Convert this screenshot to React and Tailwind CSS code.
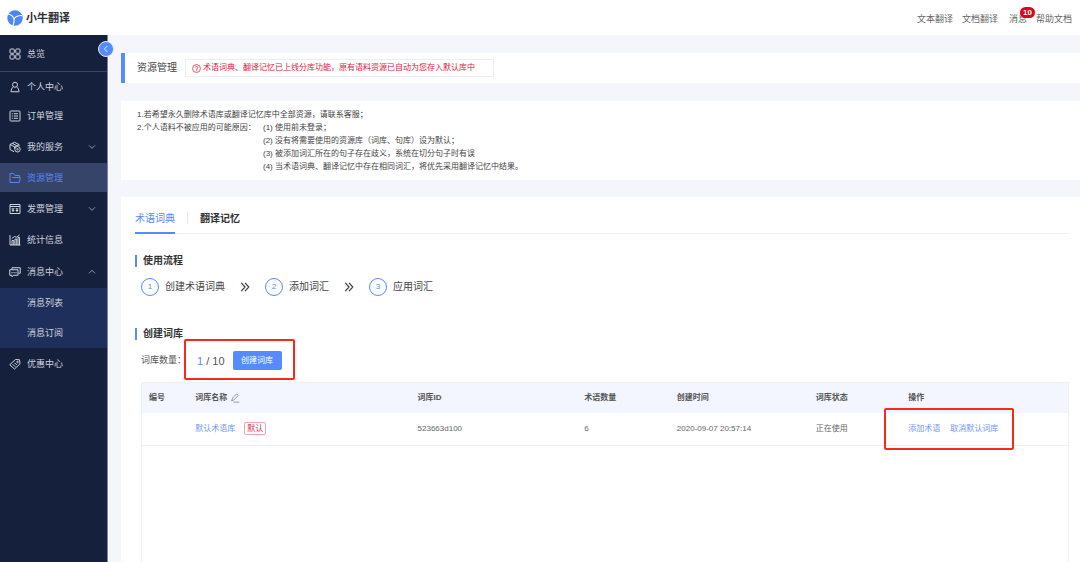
import React from "react";
import clsx from "clsx";

function Icon({ children, className = "w-3 h-3" }) {
    return (
        <svg viewBox="0 0 24 24" fill="none" stroke="currentColor" strokeWidth="2" strokeLinejoin="round" className={clsx("shrink-0", className)} aria-hidden="true">
            {children}
        </svg>
    )
}

const ICONS = {
    grid: (
        <>
            <rect x="2" y="2" width="8.5" height="8.5" rx="1.5" />
            <rect x="13.5" y="2" width="8.5" height="8.5" rx="1.5" />
            <rect x="2" y="13.5" width="8.5" height="8.5" rx="1.5" />
            <rect x="13.5" y="13.5" width="8.5" height="8.5" rx="1.5" />
        </>
    ),
    user: (
        <>
            <circle cx="12" cy="7.5" r="5" />
            <path d="M8.5 11.5C5.5 14 4.5 17 4 21.5h16c-.5-4.500-1.500-7.500-4.500-10" />
        </>
    ),
    order: (
        <>
            <rect x="2" y="2" width="20" height="20" rx="1.500" />
            <path d="M9.500 7.500H18M9.500 12H18M9.500 16.500H18M5.500 7.500h2M5.500 12h2M5.500 16.500h2" />
        </>
    ),
    service: (
        <>
            <path d="M10 21.500 2 17V7l9-4.500L20 7v3M2 7l9 4.500L20 7M11 11.500V15M6.500 4.800l9 4.500" />
            <circle cx="17" cy="16.500" r="5.500" />
            <circle cx="17" cy="16.500" r="1.500" />
        </>
    ),
    folder: <path d="M2 21V3h7.500l2.500 4h9v4M2 21h18.500L22.500 11H6.500" />,
    invoice: (
        <>
            <path d="M2 3h20v18H2zM2 7h20" />
            <path d="m5.500 10 2.500 3 2.500-3M8 13v5M5.500 14.500h5M13.500 11.500h5M16 11.500V18M13.500 15h5" />
        </>
    ),
    stats: (
        <>
            <path d="M2 2v20h21" />
            <path d="M6 22v-9h3.500v9M12 22V10h3.500v12M18 22V7h3v15M5.500 9 11 5l4 1.500L21 2" />
        </>
    ),
    message: (
        <>
            <path d="M6 7V3.500h16.500v11H19" />
            <path d="M1.500 7.500H18v11H9L6 21.500v-3H1.500z" />
            <path d="M5 13h2M9 13h2M13 13h2" strokeWidth="2.500" />
        </>
    ),
    coupon: (
        <>
            <path d="M1.500 13.500 13 3l8 .5 1 8L11 22z" />
            <circle cx="17" cy="8" r="1.500" />
            <path d="m7.500 12.500 5 5M11 9.500l4.500 4.500" />
        </>
    ),
}

function Chevron({ up }) {
    return (
        <Icon className="w-2 h-2 ml-auto mr-[11px]">
            <path d={up ? "m3 16 9-9 9 9" : "m3 7 9 9 9-9"} />
        </Icon>
    )
}

function MenuItem({ icon, label, arrow, active, className }) {
    return (
        <a
            href="#"
            className={clsx(
                "flex items-center gap-[6px] h-[29px] pl-[9px] text-[9px] leading-3",
                active ? "bg-[#36446a] text-[#5585f5]" : "text-[#d0d4dd]",
                className
            )}
        >
            <Icon>{ICONS[icon]}</Icon>
            <span>{label}</span>
            {arrow && <Chevron up={arrow === "up"} />}
        </a>
    )
}

function Sidebar() {
    return (
        <aside className="relative w-[108px] shrink-0 bg-[#15203d] border-r border-[#7a84a0]">
            <nav className="flex flex-col">
                <div className="h-[37px] pt-1 border-b border-[#3b4560]">
                    <MenuItem icon="grid" label="总览" />
                </div>
                <MenuItem icon="user" label="个人中心" />
                <MenuItem icon="order" label="订单管理" />
                <div className="flex flex-col gap-[2px] pt-[2px]">
                    <MenuItem icon="service" label="我的服务" arrow="down" />
                    <MenuItem icon="folder" label="资源管理" active />
                    <MenuItem icon="invoice" label="发票管理" arrow="down" />
                    <MenuItem icon="stats" label="统计信息" />
                    <MenuItem icon="message" label="消息中心" arrow="up" className="mt-px" />
                    <div className="flex flex-col bg-[#1f2f5b] text-[9px] leading-3 text-[#d0d4dd]">
                        <a href="#" className="flex items-center h-[30px] pl-[27px]">消息列表</a>
                        <a href="#" className="flex items-center h-[30px] pl-[27px]">消息订阅</a>
                    </div>
                    <MenuItem icon="coupon" label="优惠中心" className="-mt-px" />
                </div>
            </nav>
            <button type="button" aria-label="收起菜单" className="absolute top-[6px] -right-[7px] w-4 h-4 rounded-full border border-[#dfe6fa] bg-[#558bff] text-white flex items-center justify-center">
                <Icon className="w-2 h-2"><path d="m16 3-9 9 9 9" strokeWidth="2.500" /></Icon>
            </button>
        </aside>
    )
}

function Header() {
    return (
        <header className="flex items-center justify-between h-[35px] pl-[7px] pr-2 bg-white">
            <a href="#" className="flex items-center gap-[3px] text-[#2b2e36]">
                <svg viewBox="0 0 32 32" className="w-4 h-4" aria-hidden="true">
                    <circle cx="16" cy="16" r="15.500" fill="#4f86f7" />
                    <path d="M2 8c6 1 10 4 12 10M14 20c1-6 6-9 16-9M14 17c1 5 0 9-2 14" fill="none" stroke="#fff" strokeWidth="2.400" />
                </svg>
                <span className="text-[11px] leading-4 font-bold">小牛翻译</span>
            </a>
            <nav className="flex gap-[9px] pt-[2px] text-[9px] leading-3 text-[#666]">
                <a href="#">文本翻译</a>
                <a href="#">文档翻译</a>
                <a href="#" className="relative ml-[2px]">
                    消息
                    <span className="absolute -top-[6px] left-[11px] w-[15px] h-[11px] rounded-full bg-[#e0001f] text-white text-[8px] leading-[11px] font-bold text-center">10</span>
                </a>
                <a href="#">帮助文档</a>
            </nav>
        </header>
    )
}

function SectionTitle({ children }) {
    return (
        <h2 className="flex items-center gap-[6px] text-[10px] leading-3 font-bold text-[#333]">
            <span className="w-[2px] h-3 bg-[#558bff]" />
            {children}
        </h2>
    )
}

const STEPS = ["创建术语词典", "添加词汇", "应用词汇"]

function Steps() {
    return (
        <ol className="flex items-center pl-[6px] mt-[11px] text-[10px] leading-3 text-[#444]">
            {STEPS.map((step, i) => (
                <li key={step} className="flex items-center">
                    {i > 0 && (
                        <Icon className="w-[10px] h-[10px] mx-[15px]">
                            <path d="m3 2 9 10-9 10M12 2l9 10-9 10" strokeWidth="3" />
                        </Icon>
                    )}
                    <span className="flex items-center justify-center w-[18px] h-[18px] mr-[6px] rounded-full border border-[#558bff] text-[8px] text-[#558bff]">{i + 1}</span>
                    {step}
                </li>
            ))}
        </ol>
    )
}

function DictTable() {
    return (
        <div className="grow ml-[6px] mt-3 border border-b-0 border-[#eef0f6]">
            <table className="w-full table-fixed text-left text-[8px] leading-3 text-[#666]">
                <thead className="bg-[#f3f6fe] text-[#555]">
                    <tr className="h-[30px] *:pl-[7px] *:font-bold">
                        <th className="w-[5%]">编号</th>
                        <th className="w-[24%]">
                            <span className="flex items-center gap-[3px]">
                                词库名称
                                <button type="button" aria-label="编辑词库名称" className="text-[#888]">
                                    <Icon className="w-[10px] h-[10px]"><path d="M4 19 6 12 16 2l4 4L10 16zM8 22h14" /></Icon>
                                </button>
                            </span>
                        </th>
                        <th className="w-[18%]">词库ID</th>
                        <th className="w-[10%]">术语数量</th>
                        <th className="w-[15%]">创建时间</th>
                        <th className="w-[10%]">词库状态</th>
                        <th className="w-[18%]">操作</th>
                    </tr>
                </thead>
                <tbody>
                    <tr className="h-8 border-b border-[#eef0f6] *:pl-[7px]">
                        <td></td>
                        <td>
                            <span className="flex items-center gap-[9px]">
                                <a href="#" className="text-[#6f97fb]">默认术语库</a>
                                <span className="px-[2px] border border-[#f5a3b0] rounded-xs leading-[11px] text-[#e0314f]">默认</span>
                            </span>
                        </td>
                        <td>523663d100</td>
                        <td>6</td>
                        <td>2020-09-07 20:57:14</td>
                        <td>正在使用</td>
                        <td>
                            <span className="relative inline-flex gap-[10px] text-[#6f97fb]">
                                <a href="#">添加术语</a>
                                <a href="#">取消默认词库</a>
                                <span className="absolute -left-6 -top-[15px] h-[42px] w-[130px] border-2 border-[#f52a1c] rounded-xs pointer-events-none" />
                            </span>
                        </td>
                    </tr>
                </tbody>
            </table>
        </div>
    )
}

export default function App() {
    return (
        <div className="min-h-screen flex flex-col bg-[#f5f6fb] font-['Liberation_Sans','Noto_Sans_CJK_SC',sans-serif]">
            <Header />
            <div className="flex grow">
                <Sidebar />
                <main className="grow min-w-0 flex flex-col pl-[13px] pt-[18px]">
                    <div className="flex items-center gap-2 h-[30px] pl-3 border-l-4 border-[#558bff] bg-white">
                        <h1 className="text-[10px] leading-3 text-[#444]">资源管理</h1>
                        <p className="flex items-center gap-[2px] h-[18px] pl-[6px] pr-[18px] border border-[#eceef6] text-[8px] leading-3 text-[#e0203f]">
                            <Icon className="w-[9px] h-[9px]">
                                <circle cx="12" cy="12" r="10.500" />
                                <path d="M8.500 9.500a3.500 3.500 0 1 1 3.500 4v2M12 17v2" />
                            </Icon>
                            术语词典、翻译记忆已上线分库功能，原有语料资源已自动为您存入默认库中
                        </p>
                    </div>

                    <div className="mt-[18px] px-4 pt-[7px] pb-[7px] bg-white text-[8px] leading-[13px] text-[#444]">
                        <p>1.若希望永久删除术语库或翻译记忆库中全部资源，请联系客服；</p>
                        <div className="flex">
                            <p className="w-[126px] shrink-0">2.个人语料不被应用的可能原因：</p>
                            <ul>
                                <li>(1) 使用前未登录；</li>
                                <li>(2) 没有将需要使用的资源库（词库、句库）设为默认；</li>
                                <li>(3) 被添加词汇所在的句子存在歧义，系统在切分句子时有误</li>
                                <li>(4) 当术语词典、翻译记忆中存在相同词汇，将优先采用翻译记忆中结果。</li>
                            </ul>
                        </div>
                    </div>

                    <section className="grow flex flex-col mt-[17px] pl-[14px] pr-[11px] pt-[11px] bg-white">
                        <div className="flex items-start h-[26px] border-b border-[#eff0f4] text-[10px] leading-[22px]">
                            <button type="button" className="h-[26px] pb-[2px] border-b-2 border-[#558bff] text-[#558bff]">术语词典</button>
                            <span className="w-px h-3 mx-3 mt-1 bg-[#e8e8ee]" />
                            <button type="button" className="font-bold text-[#333]">翻译记忆</button>
                        </div>

                        <div className="mt-[21px]">
                            <SectionTitle>使用流程</SectionTitle>
                            <Steps />
                        </div>

                        <div className="mt-8">
                            <SectionTitle>创建词库</SectionTitle>
                            <div className="flex items-center mt-[11px] pl-[6px] text-[9px] text-[#555]">
                                <span className="w-14">词库数量：</span>
                                <div className="relative flex items-center gap-2">
                                    <span className="text-[11px] leading-4"><span className="text-[#558bff]">1</span> / 10</span>
                                    <button type="button" className="w-[49px] h-[19px] rounded-xs bg-[#558bff] text-white text-[8px] leading-3">创建词库</button>
                                    <span className="absolute -inset-x-[13px] -top-3 -bottom-[10px] border-2 border-[#f52a1c] rounded-xs pointer-events-none" />
                                </div>
                            </div>
                        </div>

                        <DictTable />
                    </section>
                </main>
            </div>
        </div>
    )
}
